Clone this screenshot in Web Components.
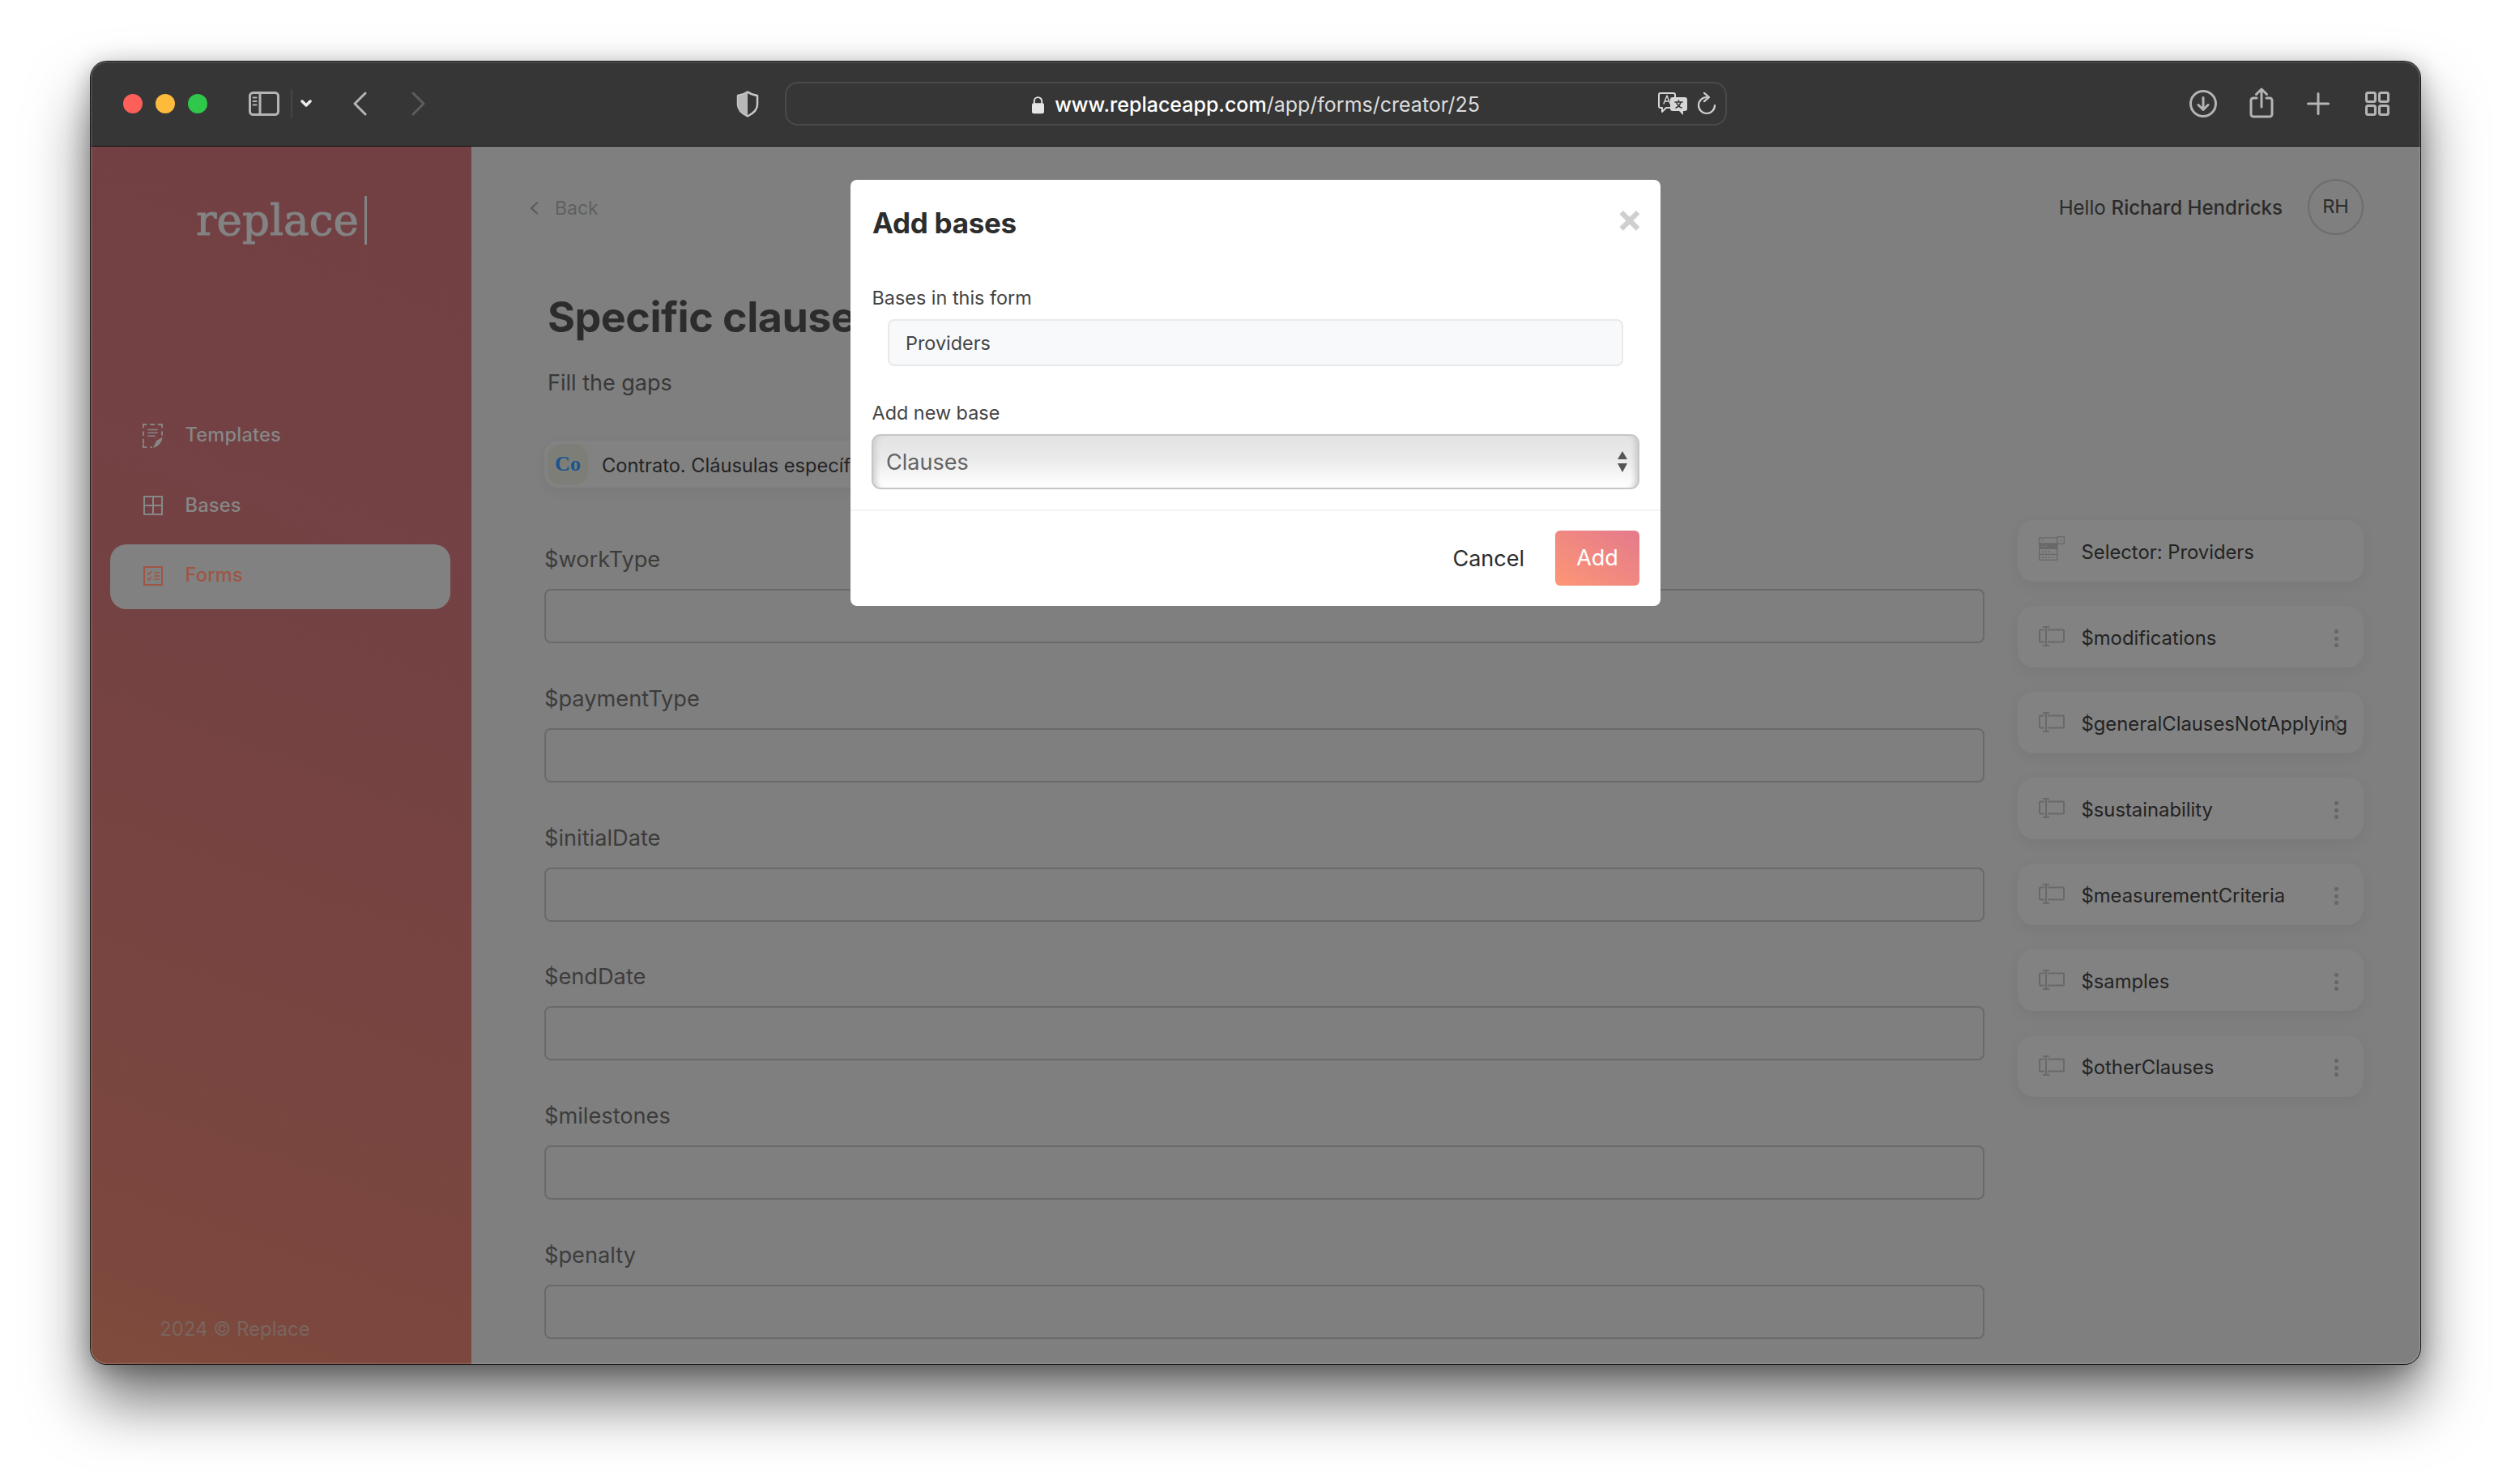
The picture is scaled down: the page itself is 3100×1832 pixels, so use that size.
<!DOCTYPE html>
<html lang="en"><head><meta charset="utf-8"><title>Replace</title>
<style>
html,body{margin:0;padding:0;background:#fff;}
body{width:3100px;height:1832px;overflow:hidden;font-family:Inter,"Liberation Sans",sans-serif;}
</style></head><body>
<app-window>
  <safari-bar slot="bar"></safari-bar>
  <side-nav slot="side">
    <nav-item icon="templates">Templates</nav-item>
    <nav-item icon="bases">Bases</nav-item>
    <nav-item icon="forms" active>Forms</nav-item>
  </side-nav>
  <main-page slot="main">
    <form-field>$workType</form-field>
    <form-field>$paymentType</form-field>
    <form-field>$initialDate</form-field>
    <form-field>$endDate</form-field>
    <form-field>$milestones</form-field>
    <form-field>$penalty</form-field>
    <var-card slot="cards" kind="selector">Selector: Providers</var-card>
    <var-card slot="cards" menu>$modifications</var-card>
    <var-card slot="cards" menu>$generalClausesNotApplying</var-card>
    <var-card slot="cards" menu>$sustainability</var-card>
    <var-card slot="cards" menu>$measurementCriteria</var-card>
    <var-card slot="cards" menu>$samples</var-card>
    <var-card slot="cards" menu>$otherClauses</var-card>
  </main-page>
  <add-bases-modal slot="modal"></add-bases-modal>
</app-window>
<script>
function def(name, html, init){
  customElements.define(name, class extends HTMLElement{
    constructor(){super();this.attachShadow({mode:'open'});}
    connectedCallback(){this.shadowRoot.innerHTML=typeof html==='function'?html(this):html;}
  });
}
def('app-window',`<style>
:host{display:block;position:absolute;left:112px;top:76px;width:2876px;height:1608px;border-radius:20px;background:#7f7f7f;
 box-shadow:0 0 0 1px #1a1a1a,0 46px 76px rgba(0,0,0,.55),0 6px 30px rgba(0,0,0,.3);}
.clip{display:flex;flex-direction:column;width:100%;height:100%;border-radius:20px;overflow:hidden;}
.body{flex:1;display:flex;min-height:0;}
.edge{position:absolute;inset:0;border-radius:20px;box-shadow:inset 0 0 0 1.5px rgba(255,255,255,.13);pointer-events:none;}
.over{position:absolute;inset:0;display:flex;justify-content:center;align-items:flex-start;padding-top:146px;pointer-events:none;}
</style><div class="clip"><slot name="bar"></slot><div class="body"><slot name="side"></slot><slot name="main"></slot></div></div>
<div class="edge"></div><div class="over"><slot name="modal"></slot></div>`);

def('safari-bar',`<style>
:host{display:flex;align-items:center;height:105px;flex:none;background:#363636;border-bottom:1px solid #111;box-sizing:border-box;padding-left:40px;position:relative;}
.tl{width:24px;height:24px;border-radius:50%;flex:none;margin-right:16px;}
svg{flex:none;display:block;fill:none;stroke:#b4b4b4;stroke-width:3;stroke-linecap:round;stroke-linejoin:round;}
.url{flex:none;width:1163px;height:54px;box-sizing:border-box;border:2px solid #4a4a4a;border-radius:16px;margin-left:32px;display:grid;grid-template-columns:1fr auto 1fr;align-items:center;}
.addr{display:flex;align-items:center;gap:13px;font:500 25px/32px Inter,sans-serif;color:#fff;white-space:nowrap;margin-top:2px;}
.addr span{color:#dcdcdc;font-weight:400;}
.r{display:flex;justify-self:end;align-items:center;gap:11px;padding-right:11px;}
</style>
<i class="tl" style="background:#ff5f59"></i><i class="tl" style="background:#febb3b"></i><i class="tl" style="background:#2fc84a;margin-right:0"></i>
<svg style="margin-left:51px" width="38" height="30" viewBox="0 0 38 30"><rect x="1.5" y="1.5" width="35" height="27" rx="4"/><path d="M14 2v26"/><path d="M5.5 7.5h4M5.5 12h4M5.5 16.500h4" stroke-width="2"/></svg>
<i style="margin-left:14px;width:2px;height:36px;background:#454545;flex:none"></i>
<svg style="margin-left:10px;stroke:#eee;stroke-width:3.500" width="14" height="10" viewBox="0 0 14 10"><path d="M2 2l5 5 5-5"/></svg>
<svg style="margin-left:50px" width="18" height="30" viewBox="0 0 18 30"><path d="M16 2L3 15l13 13"/></svg>
<svg style="margin-left:55px;stroke:#5d5d5d" width="18" height="30" viewBox="0 0 18 30"><path d="M2 2l13 13L2 28"/></svg>
<svg style="margin-left:383px" width="28" height="33" viewBox="0 0 28 33"><path d="M14 1.500c4 3 8 4 12 4.500v11c0 7-5 11-12 14.500C7 28 2 24 2 17V6c4-.5 8-1.500 12-4.500z" stroke="#c8c8c8" stroke-width="2.500"/><path d="M14 2C10 5 6 6 2 6.500V17c0 7 5 11 12 14z" fill="#b8b8b8" stroke="none"/></svg>
<div class="url"><i></i><div class="addr"><svg style="stroke:none" width="15" height="23" viewBox="0 0 16 23"><path d="M3 10V6.500a5 5 0 0 1 10 0V10" fill="none" stroke="#e6e6e6" stroke-width="2"/><rect y="9" width="16" height="14" rx="2.500" fill="#e6e6e6"/></svg><div>www.replaceapp.com<span>/app/forms/creator/25</span></div></div>
<div class="r"><svg style="stroke:#d6d6d6;stroke-width:2" width="37" height="28" viewBox="0 0 37 28"><path d="M3 1h16a2 2 0 0 1 2 2v14a2 2 0 0 1-2 2H10l-5 5v-5H3a2 2 0 0 1-2-2V3a2 2 0 0 1 2-2z"/><path d="M7 14l4-10 4 10M8.500 11h5" stroke-width="1.500"/><path d="M18 6h15a3 3 0 0 1 3 3v11a3 3 0 0 1-3 3h-2v5l-5-5h-8a3 3 0 0 1-3-3V9a3 3 0 0 1 3-3z" fill="#d6d6d6" stroke="none"/><path d="M21 12h9M25.500 10v2M28 12c-1 4-3 6-6 7M23 13c1 3 3 5 6 6" stroke="#363636" stroke-width="1.600"/></svg>
<svg style="stroke:#d0d0d0;stroke-width:2.200" width="24" height="28" viewBox="0 0 24 28"><path d="M12 6A10 10 0 1 0 22 16"/><path d="M9 .8L15 6l-6 5.200"/></svg></div></div>
<svg style="margin-left:571px" width="34" height="34" viewBox="0 0 34 34"><circle cx="17" cy="17" r="15.500"/><path d="M17 9.500v15M11 18.500l6 6 6-6"/></svg>
<svg style="margin-left:40px;margin-top:-3px" width="30" height="38" viewBox="0 0 30 38"><path d="M9 13H5a3 3 0 0 0-3 3v17a3 3 0 0 0 3 3h20a3 3 0 0 0 3-3V16a3 3 0 0 0-3-3h-4"/><path d="M15 24V2M8.500 8.500L15 2l6.500 6.500"/></svg>
<svg style="margin-left:41px" width="28" height="28" viewBox="0 0 28 28"><path d="M14 1.500v25M1.500 14h25"/></svg>
<svg style="margin-left:44px" width="30" height="30" viewBox="0 0 30 30"><rect x="1.500" y="1.500" width="11" height="11" rx="2"/><rect x="17.500" y="1.500" width="11" height="11" rx="2"/><rect x="1.500" y="17.500" width="11" height="11" rx="2"/><rect x="17.500" y="17.500" width="11" height="11" rx="2"/></svg>`);

def('side-nav',`<style>
:host{display:flex;flex-direction:column;flex:none;width:470px;box-sizing:border-box;background:linear-gradient(20deg,#7f4c3c 0%,#7b473e 10%,#764342 45%,#734044 75%,#724043 100%);}
.logo{display:flex;align-items:center;padding:61px 0 0 130px;font:53px/60px "DejaVu Serif",serif;color:#838383;letter-spacing:.1px;-webkit-text-stroke:1.1px #838383;}
.logo i{display:block;width:3px;height:60px;background:#838383;margin-left:7px;}
nav{display:flex;flex-direction:column;gap:6.500px;margin:197px 0 0 24px;width:420px;}
footer{margin-top:auto;padding:0 0 28px 85px;font:24px/30px Inter,sans-serif;color:#7a655f;}
</style><div class="logo">replace<i></i></div><nav><slot></slot></nav><footer>2024 © Replace</footer>`);

const navIcons={
templates:`<svg width="27" height="32" viewBox="0 0 80 96" fill="none" stroke="#878787" stroke-width="6"><path d="M3 17V3h14M30 3h18M60 3h17v14M3 30v18M3 60v17M3 78v15h14M30 93h8M77 30v16" /><path d="M20 24h40M20 36h40M20 49h30" stroke-width="5"/><path d="M78 52c0 20-12 36-36 44 4-14 10-22 14-30 8-4 16-8 22-14z" fill="#878787" stroke="none"/></svg>`,
bases:`<svg width="24" height="24" viewBox="0 0 24 24" fill="none" stroke="#878787" stroke-width="2"><rect x="1" y="1" width="22" height="22"/><path d="M12 1v22M1 12h22"/></svg>`,
forms:`<svg width="24" height="24" viewBox="0 0 24 24" fill="none" stroke="#9f5544" stroke-width="2"><rect x="1" y="1" width="22" height="22"/><path d="M5 8l2 2 3-4M5 15l2 2 3-4" stroke-width="1.500"/><path d="M13 8h7M13 12h7M13 16h7" stroke-width="1.600"/></svg>`};
def('nav-item',el=>`<style>
:host{display:flex;align-items:center;height:80px;padding-left:40px;border-radius:20px;font:500 23.6px/30px Inter,sans-serif;color:#878787;letter-spacing:.2px;${el.hasAttribute('active')?'background:#818181;color:#9f5544;':''}}
.i{width:25px;display:flex;justify-content:center;flex:none;margin-right:27.500px;margin-top:-3px;}
.t{margin-top:-4px;}
svg{display:block;}
</style><div class="i">${navIcons[el.getAttribute('icon')]}</div><div class="t"><slot></slot></div>`);

def('main-page',`<style>
:host{flex:1;min-width:0;display:flex;flex-direction:column;box-sizing:border-box;padding:39px 70px 0 90px;overflow:hidden;font-family:Inter,sans-serif;}
header{display:flex;align-items:center;height:70px;flex:none;}
.back{display:flex;align-items:center;gap:20px;margin:4px 0 0 -18px;font:400 23px/30px Inter,sans-serif;color:#5f5f5f;}
.hello{margin:4px 0 0 auto;font:400 24.1px/30px Inter,sans-serif;color:#2b2b2b;}
.hello b{font-weight:500;}
.av{width:69px;height:69px;box-sizing:border-box;margin-left:31px;border:2px solid #6d6d6d;border-radius:50%;display:flex;align-items:center;justify-content:center;font:400 23.5px/26px Inter,sans-serif;color:#2b2b2b;}
.cols{display:flex;gap:41px;flex:1;min-height:0;}
.left{flex:none;width:1778px;}
h1{margin:72px 0 0 4px;font:700 52px/60px Inter,sans-serif;color:#2c2c2c;letter-spacing:-.5px;white-space:nowrap;}
p{margin:35px 0 0 4px;font:400 27px/32px Inter,sans-serif;color:#383838;}
.chip{display:flex;align-items:center;width:max-content;min-width:700px;height:58px;margin-top:55px;padding-left:4px;box-sizing:border-box;background:#828282;border-radius:16px;box-shadow:0 4px 16px rgba(0,0,0,.06);font:400 23.6px/30px Inter,sans-serif;color:#222;white-space:nowrap;}
.chip span{margin-top:3px;}
.co{width:50px;height:50px;border-radius:16px;background:#7e7e79;display:flex;align-items:center;justify-content:center;font:700 26px/30px "Liberation Serif",serif;color:#1a5490;margin-right:17px;}
.fields{margin-top:72px;}
.right{flex:none;width:427px;padding-top:352px;display:flex;flex-direction:column;gap:30px;}
::slotted(var-card){flex:none;}
</style>
<header><div class="back"><svg width="11" height="16" viewBox="0 0 11 16" fill="none" stroke="#5a5a5a" stroke-width="2.200" stroke-linecap="round" stroke-linejoin="round"><path d="M9 1.500L2 8l7 6.500"/></svg>Back</div>
<div class="hello">Hello <b>Richard Hendricks</b></div><div class="av">RH</div></header>
<div class="cols"><div class="left"><h1>Specific clauses</h1><p>Fill the gaps</p>
<div class="chip"><div class="co">Co</div><span>Contrato. Cláusulas específicas</span></div>
<div class="fields"><slot></slot></div></div>
<div class="right"><slot name="cards"></slot></div></div>`);

def('form-field',`<style>
:host{display:block;margin-bottom:51.800px;}
label{display:block;font:400 27.200px/34px Inter,sans-serif;color:#3c3c3c;}
.in{height:67px;box-sizing:border-box;margin-top:19px;border:2px solid #6a6a6a;border-radius:8px;background:#7f7f7f;width:1778px;}
</style><label><slot></slot></label><div class="in"></div>`);

def('var-card',el=>`<style>
:host{display:flex;align-items:center;position:relative;height:76px;border-radius:20px;background:#828282;box-shadow:0 5px 18px rgba(0,0,0,.06);box-sizing:border-box;padding-left:26px;font:400 23.8px/30px Inter,sans-serif;color:#222;white-space:nowrap;}
.i{width:32px;flex:none;margin-right:20.500px;}
svg{display:block;}
.t{margin-top:4px;}
.d{position:absolute;left:390.500px;top:29px;display:flex;flex-direction:column;gap:3.500px;}
.d i{display:block;width:5px;height:5px;border-radius:50%;background:#666;}
</style><div class="i">${el.getAttribute('kind')==='selector'?
`<svg width="32" height="30" viewBox="0 0 96 90" fill="none" stroke="#696969" stroke-width="4" style="margin-top:-6px"><rect x="2" y="6" width="66" height="82"/><rect x="68" y="2" width="26" height="26"/><path d="M2 46h66M2 67h66"/><rect x="2" y="27" width="66" height="19" fill="#696969"/><path d="M12 16h6M80 15h5M36 57h6M12 57h6M24 57h6M12 78h6M24 78h6M36 78h6M48 78h6" stroke-width="4"/><path d="M12 37h6M24 37h6" stroke="#7f7f7f"/></svg>`:
`<svg width="32" height="25" viewBox="0 0 32 25" fill="none" stroke="#696969" stroke-width="2" style="margin-top:-2px"><path d="M7 4.500H2a1 1 0 0 0-1 1v13a1 1 0 0 0 1 1h5M11 4.500h19a1 1 0 0 1 1 1v13a1 1 0 0 1-1 1H11"/><path d="M9 1v23M5 1h8M5 24h8"/></svg>`}</div>
<div class="t"><slot></slot></div>${el.hasAttribute('menu')?'<div class="d"><i></i><i></i><i></i></div>':''}`);

def('add-bases-modal',`<style>
:host{display:block;width:1000px;height:526px;box-sizing:border-box;background:#fff;border-radius:8px;pointer-events:auto;padding-top:31px;font-family:Inter,sans-serif;position:relative;}
.top{display:flex;justify-content:space-between;padding:0 22px 0 27px;}
h2{margin:0;font:700 35px/44px Inter,sans-serif;color:#2d2d2d;letter-spacing:-.3px;}
.x{font:700 48px/38px Inter,sans-serif;color:#cfcfcf;margin-top:-3px;}
.l{display:block;margin-left:26.500px;font:400 23.400px/30px Inter,sans-serif;color:#444;}
.ro{margin:11px 0 0 46px;width:908px;height:58px;box-sizing:border-box;background:#f8f9fb;border:2px solid #e8e9eb;border-radius:8px;padding:2px 0 0 20px;display:flex;align-items:center;font:400 23.400px/30px Inter,sans-serif;color:#444;}
.sel{margin:10.500px 0 0 26px;width:948px;height:68px;box-sizing:border-box;border:2px solid #c6c6c6;border-radius:11px;padding:3px 0 0 16px;display:flex;align-items:center;justify-content:space-between;font:400 27px/34px Inter,sans-serif;color:#636363;
 background:linear-gradient(#e3e3e3 0%,#eaeaea 45%,#fafafa 85%,#fff 100%);box-shadow:inset 9px 0 7px -6px #cccccc,inset -9px 0 7px -6px #c8c8c8;}
.sel svg{display:block;margin:-3px 12px 0 0;}
hr{margin:25px 0 0;height:2px;border:0;background:#f3f3f3;}
.foot{display:flex;justify-content:flex-end;align-items:center;gap:38px;padding:24px 26px 0 0;}
.c{font:400 27px/34px Inter,sans-serif;color:#2d2d2d;margin-top:2px;}
.a{width:104px;height:68px;border-radius:6px;display:flex;align-items:center;justify-content:center;font:400 27px/34px Inter,sans-serif;color:#fff;background:linear-gradient(to top right,#fd9676,#e47a8c);}
</style>
<div class="top"><h2>Add bases</h2><div class="x">×</div></div>
<label class="l" style="margin-top:56px">Bases in this form</label>
<div class="ro">Providers</div>
<label class="l" style="margin-top:43px">Add new base</label>
<div class="sel">Clauses<svg width="14" height="26" viewBox="0 0 14 26" fill="#555"><path d="M7 0l6 10H1zM1 15h12L7 26z"/></svg></div>
<hr>
<div class="foot"><div class="c">Cancel</div><div class="a">Add</div></div>`);
</script>
</body></html>
